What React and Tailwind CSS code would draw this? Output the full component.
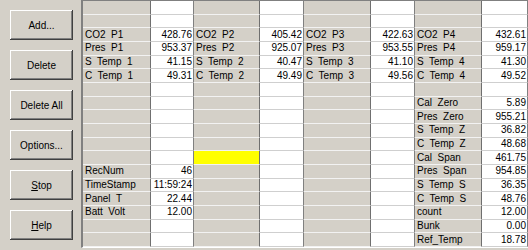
import React from "react";

const ROWS = 18;

// each group: label column + value column, keyed by row index
const groups = [
  {
    lw: "w-[68px]",
    vw: "w-[43px]",
    cells: {
      2: ["CO2  P1", "428.76"],
      3: ["Pres  P1", "953.37"],
      4: ["S  Temp  1", "41.15"],
      5: ["C  Temp  1", "49.31"],
      12: ["RecNum", "46"],
      13: ["TimeStamp", "11:59:24"],
      14: ["Panel  T", "22.44"],
      15: ["Batt  Volt", "12.00"],
    },
  },
  {
    lw: "w-[66px]",
    vw: "w-[44px]",
    yellow: 11,
    cells: {
      2: ["CO2  P2", "405.42"],
      3: ["Pres  P2", "925.07"],
      4: ["S  Temp  2", "40.47"],
      5: ["C  Temp  2", "49.49"],
    },
  },
  {
    lw: "w-[67px]",
    vw: "w-[44px]",
    cells: {
      2: ["CO2  P3", "422.63"],
      3: ["Pres  P3", "953.55"],
      4: ["S  Temp  3", "41.10"],
      5: ["C  Temp  3", "49.56"],
    },
  },
  {
    lw: "w-[67px]",
    vw: "w-[46px]",
    cells: {
      2: ["CO2  P4", "432.61"],
      3: ["Pres  P4", "959.17"],
      4: ["S  Temp  4", "41.30"],
      5: ["C  Temp  4", "49.52"],
      7: ["Cal  Zero", "5.89"],
      8: ["Pres  Zero", "955.21"],
      9: ["S  Temp  Z", "36.82"],
      10: ["C  Temp  Z", "48.68"],
      11: ["Cal  Span", "461.75"],
      12: ["Pres  Span", "954.85"],
      13: ["S  Temp  S", "36.35"],
      14: ["C  Temp  S", "48.76"],
      15: ["count", "12.00"],
      16: ["Bunk", "0.00"],
      17: ["Ref_Temp", "18.78"],
    },
  },
];

function Button({ children }) {
  return (
    <button className="w-[63px] h-[30px] bg-[#d4d0c8] text-[10px] text-black shadow-[inset_-1px_-1px_#404040,inset_1px_1px_#ffffff,inset_-2px_-2px_#808080]">
      {children}
    </button>
  );
}

function Column({ width, children }) {
  return <div className={`${width} grid grid-rows-[repeat(18,1fr)]`}>{children}</div>;
}

export default function App() {
  const rows = Array.from({ length: ROWS }, (_, i) => i);

  return (
    <div
      className="w-[528px] h-[250px] bg-[#d4d0c8] flex overflow-hidden text-black"
      style={{ fontFamily: '"Liberation Sans", Arial, sans-serif' }}
    >
      <div className="w-[81px] shrink-0 flex flex-col gap-[10px] pl-[10px] pt-[10px]">
        <Button>Add...</Button>
        <Button>Delete</Button>
        <Button>Delete All</Button>
        <Button>Options...</Button>
        <Button>
          <span className="underline">S</span>top
        </Button>
        <Button>
          <span className="underline">H</span>elp
        </Button>
      </div>

      <div className="flex-1 h-[248px] border-l-2 border-t border-b border-l-[#808080] border-t-[#808080] border-b-white flex">
        {groups.map((g, gi) => (
          <React.Fragment key={gi}>
            <Column width={g.lw}>
              {rows.map((r) => (
                <div
                  key={r}
                  className={`${
                    g.yellow === r ? "bg-[#ffff00]" : "bg-[#d4d0c8]"
                  } border-r border-b border-r-[#6f6f6f] border-b-[#f2f2f2] pl-[2px] text-[10px] leading-none flex items-center whitespace-pre overflow-hidden`}
                >
                  {g.cells[r]?.[0] ?? ""}
                </div>
              ))}
            </Column>
            <Column width={g.vw}>
              {rows.map((r) => (
                <div
                  key={r}
                  className="bg-white border-r border-b border-r-[#808080] border-b-[#cfcfcf] pr-[1px] text-[10px] leading-none flex items-center justify-end whitespace-pre overflow-hidden"
                >
                  {g.cells[r]?.[1] ?? ""}
                </div>
              ))}
            </Column>
          </React.Fragment>
        ))}
      </div>
    </div>
  );
}
